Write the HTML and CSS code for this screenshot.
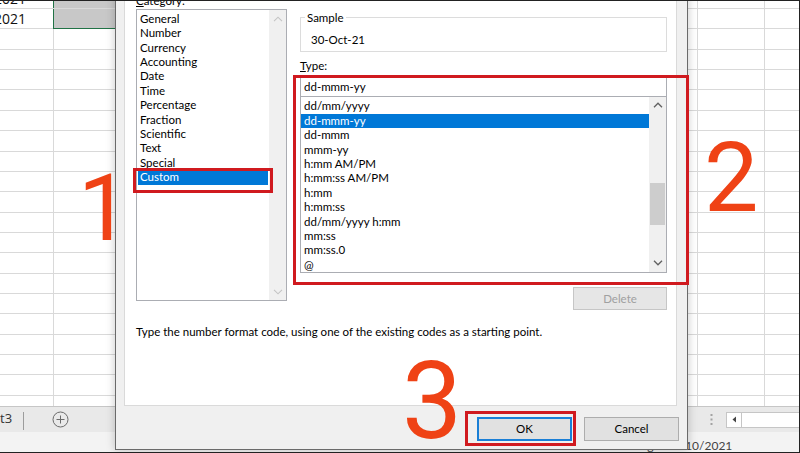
FILE: index.html
```html
<!DOCTYPE html>
<html>
<head>
<meta charset="utf-8">
<title>Format Cells - Custom</title>
<link rel="stylesheet" href="styles.css">
</head>
<body>
<div class="screen">
  <div class="sheet">
    <div class="grid">
      <div class="row"><div class="cell-a"><span>2021</span></div><div class="cell-b"></div></div>
      <div class="row"><div class="cell-a"><span>2021</span></div><div class="cell-b"></div></div>
      <div class="row"></div><div class="row"></div><div class="row"></div><div class="row"></div>
      <div class="row"></div><div class="row"></div><div class="row"></div><div class="row"></div>
      <div class="row"></div><div class="row"></div><div class="row"></div><div class="row"></div>
      <div class="row"></div><div class="row"></div><div class="row"></div><div class="row"></div>
      <div class="row"></div><div class="row"></div><div class="row"></div>
    </div>
    <div class="tabbar">
      <span class="tab">t3</span>
      <span class="tab-sep"></span>
      <svg class="add" width="17" height="17" viewBox="0 0 17 17"><circle cx="8.5" cy="8.5" r="7.5" fill="none" stroke="#6b6b6b" stroke-width="1"/><path d="M8.5 4.5v8M4.5 8.5h8" stroke="#6b6b6b" stroke-width="1"/></svg>
      <span class="spacer"></span>
      <svg class="dots" width="3" height="11" viewBox="0 0 3 11"><rect x="0.5" y="0" width="2" height="2" fill="#a3a3a3"/><rect x="0.5" y="4.5" width="2" height="2" fill="#a3a3a3"/><rect x="0.5" y="9" width="2" height="2" fill="#a3a3a3"/></svg>
      <div class="hscroll"><span class="hs-btn"><svg width="5" height="7" viewBox="0 0 5 7"><path d="M4 0.5L0.5 3.5L4 6.5Z" fill="#444"/></svg></span></div>
    </div>
    <div class="statusbar">Average: 30/10/2021</div>
  </div>

  <div class="dialog">
    <div class="panel">
      <div class="cols">
        <div class="col-left">
          <div class="label"><u>C</u>ategory:</div>
          <div class="listbox cat">
            <ul class="items">
              <li>General</li>
              <li>Number</li>
              <li>Currency</li>
              <li>Accounting</li>
              <li>Date</li>
              <li>Time</li>
              <li>Percentage</li>
              <li>Fraction</li>
              <li>Scientific</li>
              <li>Text</li>
              <li>Special</li>
              <li class="selected">Custom</li>
            </ul>
            <div class="vscroll disabled">
              <span class="sb-btn"><svg width="10" height="6" viewBox="0 0 10 6"><polyline points="1,5.2 5,1.2 9,5.2" fill="none" stroke="currentColor" stroke-width="1.1"/></svg></span>
              <span class="sb-track"></span>
              <span class="sb-btn"><svg width="10" height="6" viewBox="0 0 10 6"><polyline points="1,0.8 5,4.8 9,0.8" fill="none" stroke="currentColor" stroke-width="1.1"/></svg></span>
            </div>
          </div>
        </div>
        <div class="col-right">
          <fieldset class="sample">
            <legend>Sample</legend>
            <div class="sample-val">30-Oct-21</div>
          </fieldset>
          <div class="label type-label"><u>T</u>ype:</div>
          <div class="input">dd-mmm-yy</div>
          <div class="listbox types">
            <ul class="items">
              <li>dd/mm/yyyy</li>
              <li class="selected">dd-mmm-yy</li>
              <li>dd-mmm</li>
              <li>mmm-yy</li>
              <li>h:mm AM/PM</li>
              <li>h:mm:ss AM/PM</li>
              <li>h:mm</li>
              <li>h:mm:ss</li>
              <li>dd/mm/yyyy h:mm</li>
              <li>mm:ss</li>
              <li>mm:ss.0</li>
              <li>@</li>
            </ul>
            <div class="vscroll">
              <span class="sb-btn"><svg width="10" height="6" viewBox="0 0 10 6"><polyline points="1,5.2 5,1.2 9,5.2" fill="none" stroke="currentColor" stroke-width="1.3"/></svg></span>
              <span class="sb-track"><span class="sb-thumb"></span></span>
              <span class="sb-btn"><svg width="10" height="6" viewBox="0 0 10 6"><polyline points="1,0.8 5,4.8 9,0.8" fill="none" stroke="currentColor" stroke-width="1.3"/></svg></span>
            </div>
          </div>
          <div class="btn-row"><button class="btn btn-disabled" type="button">Delete</button></div>
        </div>
      </div>
      <p class="hint">Type the number format code, using one of the existing codes as a starting point.</p>
    </div>
    <div class="footer">
      <button class="btn btn-default" type="button">OK</button>
      <button class="btn" type="button">Cancel</button>
    </div>
  </div>

  <div class="mark mark-1"></div>
  <div class="mark mark-2"></div>
  <div class="mark mark-3"></div>
  <div class="num num-1">1</div>
  <div class="num num-2">2</div>
  <div class="num num-3">3</div>
  <div class="frame"></div>
</div>
</body>
</html>
```

FILE: styles.css
```css
* { box-sizing: border-box; }
html, body { margin: 0; padding: 0; }
body {
  width: 800px;
  height: 453px;
  overflow: hidden;
  background: #fff;
  font-family: "Lato", "Open Sans", sans-serif;
}
.screen {
  position: relative;
  width: 800px;
  height: 453px;
  overflow: hidden;
}

/* ---------- spreadsheet ---------- */
.sheet {
  display: flex;
  flex-direction: column;
  height: 453px;
}
.grid {
  height: 410px;
  overflow: hidden;
  background-image:
    linear-gradient(#d9d9d9, #d9d9d9),
    linear-gradient(#d9d9d9, #d9d9d9),
    linear-gradient(#d9d9d9, #d9d9d9);
  background-size: 1px 100%;
  background-repeat: no-repeat;
  background-position: 53px 0, 697px 0, 764px 0;
}
.row {
  display: flex;
  height: 20.37px;
  border-bottom: 1px solid #d9d9d9;
}
.row:first-child { margin-top: -11.37px; }
.cell-a {
  width: 54px;
  display: flex;
  align-items: center;
  overflow: hidden;
  font-family: "Open Sans", sans-serif;
  font-size: 14px;
  color: #111;
}
.cell-a span { margin-left: -6px; }
.cell-b {
  width: 66px;
  background: #c8c8c8;
  box-shadow: -1px 0 0 #217346;
}
.row:nth-child(2) .cell-b {
  box-shadow: -1px 0 0 #217346, 0 1px 0 #217346, -1px 1px 0 #217346;
}

.tabbar {
  height: 26px;
  display: flex;
  align-items: center;
  background: #e9e9e9;
  border-top: 1px solid #c6c6c6;
}
.tab {
  width: 23px;
  font-family: "Open Sans", sans-serif;
  font-size: 13px;
  color: #333;
  line-height: 16px;
  margin-top: -3px;
}
.tab-sep {
  width: 1px;
  height: 18px;
  background: #9c9c9c;
  margin-top: 2px;
}
.add { margin-left: 28px; }
.spacer { flex: 1; }
.dots { margin-right: 13px; }
.hscroll {
  width: 74px;
  height: 16px;
  display: flex;
  background: #fff;
  border: 1px solid #c6c6c6;
  border-right: 0;
}
.hs-btn {
  width: 15px;
  display: flex;
  align-items: center;
  justify-content: center;
  border-right: 1px solid #c6c6c6;
}
.statusbar {
  flex: 1;
  background: #f3f3f3;
  padding-left: 617px;
  font-family: "Lato", sans-serif;
  font-size: 12px;
  line-height: 14px;
  padding-top: 7px;
  color: #444;
  white-space: nowrap;
}

/* ---------- dialog ---------- */
.dialog {
  position: absolute;
  left: 115px;
  top: -60px;
  width: 573px;
  height: 510px;
  display: flex;
  flex-direction: column;
  padding: 0 10px 0 8px;
  background: #f0f0f0;
  border: 1px solid #6a6a6a;
  box-shadow: 0 0 9px rgba(0, 0, 0, 0.22);
  font-size: 11.5px;
  color: #000;
}
.panel {
  height: 465px;
  background: #fff;
  border: 1px solid #dadada;
  padding: 51px 0 0 11px;
}
.cols { display: flex; }
.col-left { width: 151px; }
.col-right { width: 367px; margin-left: 13px; }
.label { line-height: 15px; }
.label u { text-decoration: underline; text-underline-offset: 1px; }

.listbox {
  display: flex;
  background: #fff;
  border: 1px solid #abadb3;
}
.items {
  flex: 1;
  margin: 0;
  list-style: none;
}
.items li {
  line-height: 14.4px;
  white-space: nowrap;
}
.items li.selected {
  background: #0078d7;
  color: #fff;
}
.cat {
  margin-top: 1px;
  height: 292px;
}
.cat .items { padding: 1.8px 1px 0 1px; }
.cat .items li { padding-left: 2px; }
.types {
  margin-top: -1px;
  height: 177px;
}
.types .items { padding: 2.3px 0 0 0; }
.types .items li { padding-left: 3px; }

.vscroll {
  width: 17px;
  display: flex;
  flex-direction: column;
  background: #f0f0f0;
  color: #606060;
}
.vscroll.disabled { color: #c4c4c4; }
.sb-btn {
  height: 17px;
  display: flex;
  align-items: center;
  justify-content: center;
}
.sb-track {
  flex: 1;
  padding-top: 69px;
}
.sb-thumb {
  display: block;
  height: 42px;
  margin: 0 1px;
  background: #cdcdcd;
}

.sample {
  margin: 16.7px 0 0;
  padding: 7px 0 4px 4px;
  min-width: 0;
  border: 1px solid #dcdcdc;
}
.sample legend {
  padding: 0 2px;
  line-height: 15px;
}
.sample-val {
  line-height: 15px;
  padding-left: 6px;
}
.type-label { margin-top: 6.5px; }
.input {
  margin-top: 3.8px;
  height: 20px;
  border: 1px solid #abadb3;
  padding-left: 3px;
  line-height: 17px;
}

.btn-row {
  display: flex;
  justify-content: flex-end;
  margin-top: 14px;
}
.btn {
  width: 95px;
  height: 24px;
  padding: 0;
  font-family: inherit;
  font-size: 11.5px;
  color: #000;
  background: #e1e1e1;
  border: 1px solid #adadad;
}
.btn-disabled {
  width: 94px;
  height: 23px;
  color: #a0a0a0;
  background: #e6e6e6;
  border-color: #c6c6c6;
}
.btn-default {
  border: 2px solid #1a7fd6;
}
.hint {
  margin: 14.5px 0 0;
  line-height: 15px;
}
.footer {
  flex: 1;
  display: flex;
  justify-content: flex-end;
  align-items: flex-start;
  gap: 12px;
  padding-top: 10.5px;
  margin-right: -2px;
}

/* ---------- annotations ---------- */
.mark {
  position: absolute;
  border: 3px solid #d01a1f;
}
.mark-1 { left: 133px; top: 168px; width: 140px; height: 25px; }
.mark-2 { left: 293px; top: 75px; width: 396px; height: 210px; }
.mark-3 { left: 465px; top: 411px; width: 111px; height: 35px; }

.num {
  position: absolute;
  font-family: "Roboto", sans-serif;
  font-weight: 400;
  line-height: 1;
  color: #ef4215;
}
.num-1 { left: 78px; top: 162px; font-size: 93px; }
.num-2 { left: 704px; top: 130px; font-size: 97px; }
.num-3 { left: 402px; top: 348px; font-size: 107px; }

.frame {
  position: absolute;
  inset: 0;
  border-top: 1px solid #222;
  border-right: 1px solid #222;
  border-bottom: 1px solid #222;
  pointer-events: none;
}
```
